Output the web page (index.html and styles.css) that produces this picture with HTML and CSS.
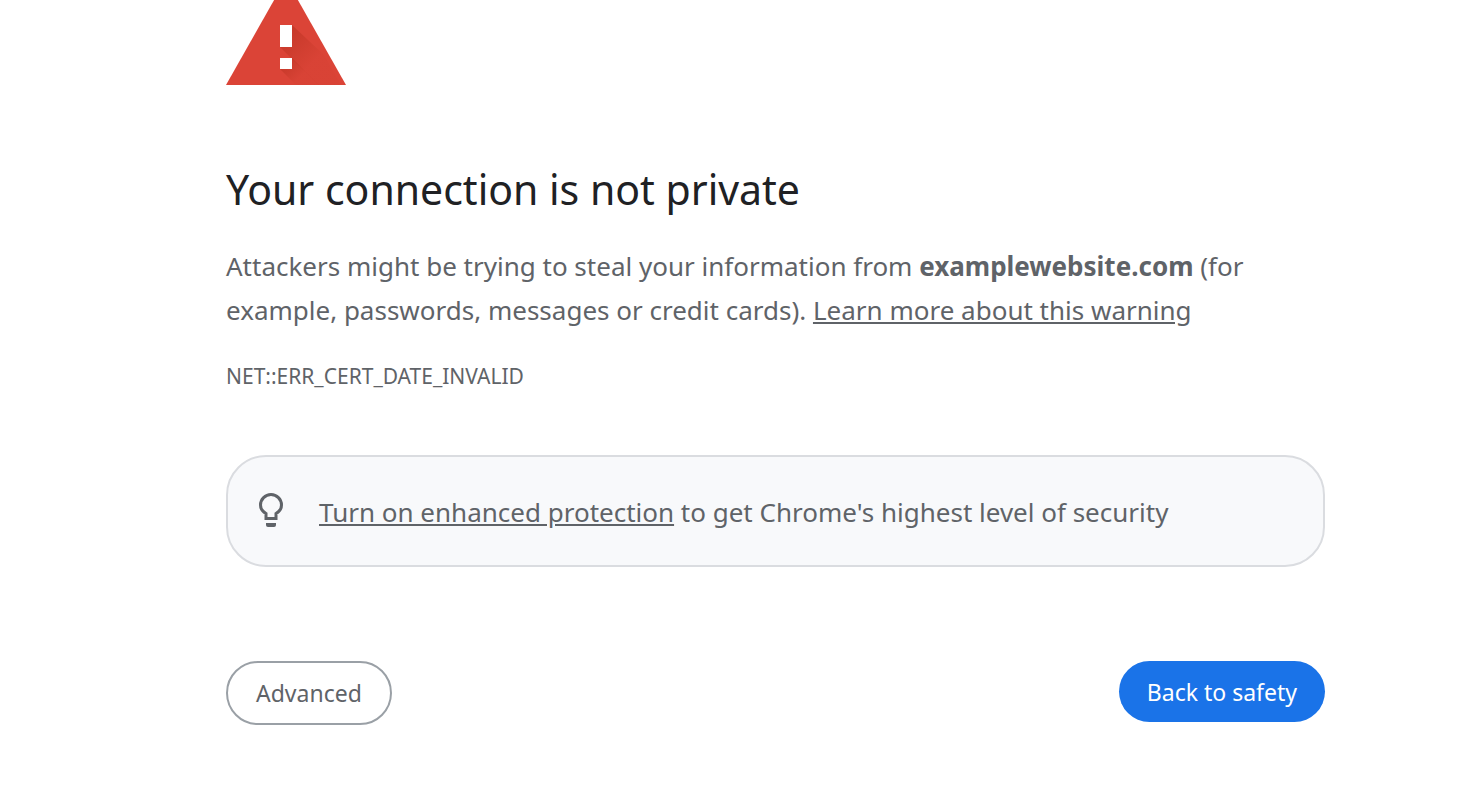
FILE: index.html
```html
<!DOCTYPE html>
<html lang="en">
<head>
  <meta charset="UTF-8">
  <meta name="viewport" content="width=device-width, initial-scale=1.0">
  <title>Privacy error</title>
  <link rel="stylesheet" href="styles.css">
</head>
<body>
  <main class="interstitial">
    <svg class="icon" viewBox="0 0 120 106" aria-hidden="true">
      <defs>
        <linearGradient id="shade" gradientUnits="userSpaceOnUse" x1="58" y1="60" x2="84" y2="86">
          <stop offset="0" stop-color="#a52714" stop-opacity=".36"/>
          <stop offset="1" stop-color="#a52714" stop-opacity=".04"/>
        </linearGradient>
        <linearGradient id="shade-dot" gradientUnits="userSpaceOnUse" x1="60" y1="84" x2="74" y2="98">
          <stop offset="0" stop-color="#a52714" stop-opacity=".36"/>
          <stop offset="1" stop-color="#a52714" stop-opacity=".04"/>
        </linearGradient>
      </defs>
      <path fill="#db4437" d="M60 0l60 106H0z"/>
      <path fill="url(#shade)" d="M66 46l32 30 17 30H92L54 68z"/>
      <path fill="url(#shade-dot)" d="M66 79l27 27H70L54 90z"/>
      <path fill="#fff" d="M54 46h12v22H54zM54 79h12v11H54z"/>
    </svg>
    <h1>Your connection is not private</h1>
    <p class="message">Attackers might be trying to steal your information from <strong>examplewebsite.com</strong> (for example, passwords, messages or credit cards). <a href="#">Learn more about this warning</a></p>
    <div class="error-code">NET::ERR_CERT_DATE_INVALID</div>
    <div class="enhanced">
      <svg class="bulb" viewBox="0 0 24 34" aria-hidden="true">
        <path fill="none" stroke="#5f6368" stroke-width="3" d="M7 25.500v-5C3.500 18.500 1.500 15.500 1.500 12a10.500 10.500 0 0 1 21 0c0 3.500-2 6.500-5.500 8.500v5z"/>
        <path fill="#5f6368" d="M7 30h10v2a2 2 0 0 1-2 2H9a2 2 0 0 1-2-2z"/>
      </svg>
      <p><a href="#">Turn on enhanced protection</a> to get Chrome's highest level of security</p>
    </div>
    <div class="nav">
      <button class="btn btn-details" type="button">Advanced</button>
      <button class="btn btn-primary" type="button">Back to safety</button>
    </div>
  </main>
</body>
</html>
```
FILE: styles.css
```css
body {
  margin: 0;
  background: #fff;
  color: #5f6368;
  font-family: "Segoe UI", "Noto Sans", sans-serif;
  font-size: 26px;
  line-height: 44px;
  overflow: hidden;
}

.interstitial {
  max-width: 1099px;
  margin: -21px 155px 0 226px;
}

.icon {
  display: block;
  width: 120px;
  height: 106px;
}

h1 {
  margin: 76px 0 27px;
  color: #202124;
  font-size: 41px;
  font-weight: 400;
  line-height: 56px;
}

p {
  margin: 0;
}

a {
  color: inherit;
  text-decoration: underline;
}

.error-code {
  margin-top: 28px;
  font-size: 21px;
  line-height: 32px;
}

.enhanced {
  display: flex;
  align-items: center;
  gap: 36px;
  margin-top: 63px;
  padding: 33px 31px 31px;
  border: 2px solid #dadce0;
  border-radius: 40px;
  background: #f8f9fb;
}

.bulb {
  flex: none;
  width: 24px;
  height: 34px;
  padding-bottom: 4px;
}

.nav {
  display: flex;
  justify-content: space-between;
  align-items: flex-start;
  margin-top: 94px;
}

.btn {
  box-sizing: border-box;
  height: 64px;
  padding: 0 28px;
  border: 2px solid #9aa0a6;
  border-radius: 32px;
  background: #fff;
  color: #5f6368;
  font-family: inherit;
  font-size: 23px;
}

.btn-primary {
  height: 61px;
  border: 0;
  background: #1a73e8;
  color: #fff;
}
```
